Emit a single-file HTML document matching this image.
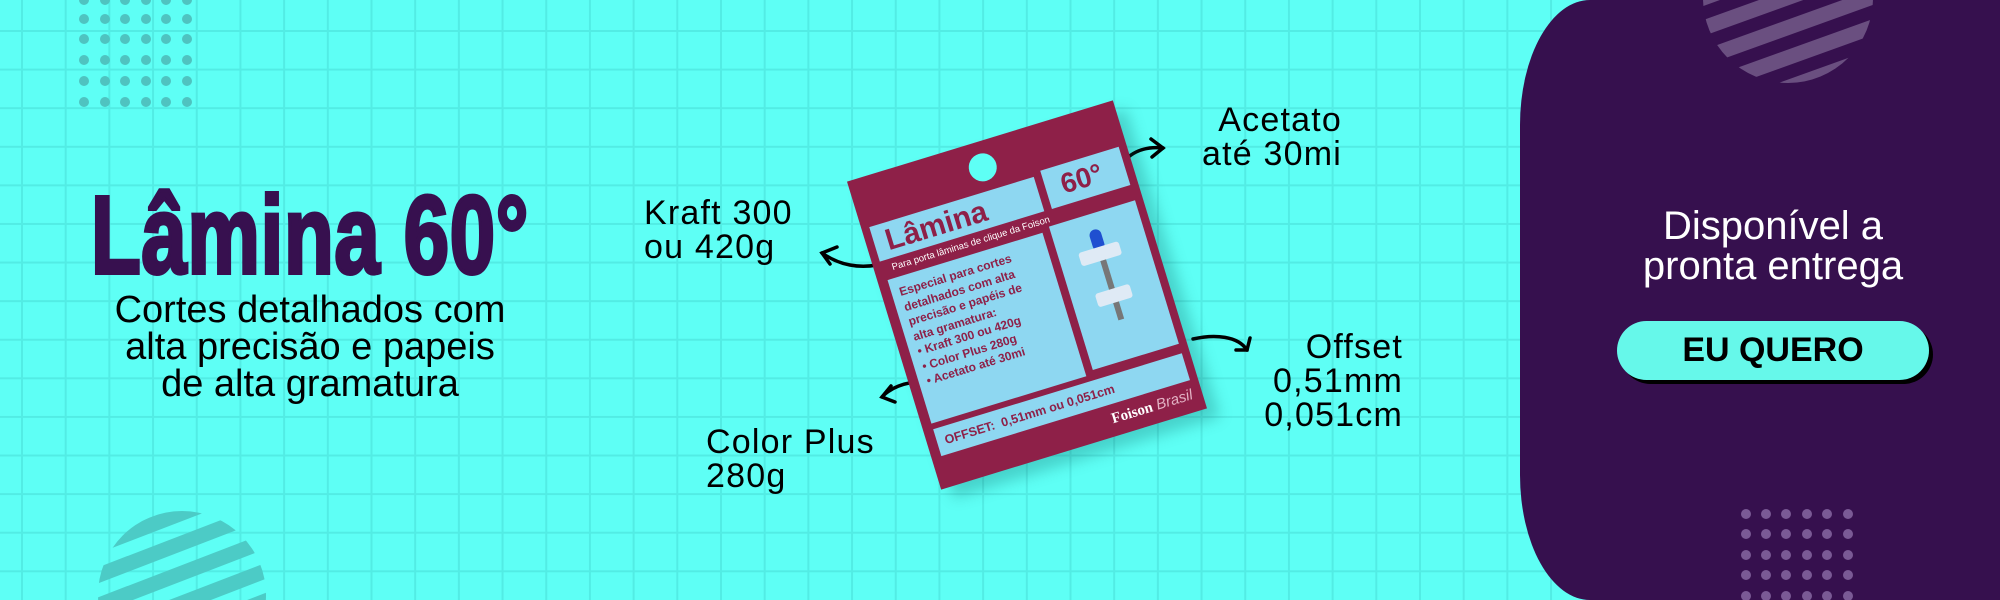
<!DOCTYPE html>
<html><head><meta charset="utf-8"><style>
*{margin:0;padding:0;box-sizing:border-box}
html,body{width:2000px;height:600px;overflow:hidden}
body{position:relative;font-family:"Liberation Sans",sans-serif;
background-color:#5efff5;
background-image:linear-gradient(90deg,#52ece4 2px,transparent 2px),linear-gradient(#52ece4 2px,transparent 2px);
background-size:43.7px 38.6px;background-position:21px 30px}
.abs{position:absolute}
.lbl{position:absolute;font-size:34px;letter-spacing:1.2px;line-height:34px;color:#000}
.panel{position:absolute;left:1520px;top:0;width:480px;height:600px;background:#36104e;border-radius:70px 0 0 70px/125px 0 0 125px;overflow:hidden}
.card{position:absolute;left:888px;top:134px;width:278px;height:322px;background:#8e2048;transform:rotate(-17deg);box-shadow:10px 12px 14px rgba(0,80,80,0.25)}
.box{position:absolute;background:#8ed7f1}
.ct{color:#8e2048;font-weight:bold}
</style></head><body>

<svg class="abs" style="left:0;top:0" width="2000" height="600">
<g fill="#4fc3c0">
<g id="dr">
<circle cx="84" cy="0" r="5"/><circle cx="105" cy="0" r="5"/><circle cx="125" cy="0" r="5"/><circle cx="146" cy="0" r="5"/><circle cx="166" cy="0" r="5"/><circle cx="187" cy="0" r="5"/>
</g>
<use href="#dr" y="19"/><use href="#dr" y="39"/><use href="#dr" y="60"/><use href="#dr" y="81"/><use href="#dr" y="102"/>
</g>
<defs><clipPath id="c1"><circle cx="182" cy="595" r="84"/></clipPath></defs>
<g clip-path="url(#c1)" stroke="#4ccbc6" stroke-width="15">
<line x1="60" y1="560" x2="320" y2="460"/><line x1="60" y1="590" x2="320" y2="490"/><line x1="60" y1="620" x2="320" y2="520"/><line x1="60" y1="650" x2="320" y2="550"/><line x1="60" y1="680" x2="320" y2="580"/><line x1="60" y1="710" x2="320" y2="610"/>
</g>
<g fill="none" stroke="#000" stroke-width="3.5" stroke-linecap="round">
<path d="M877 265 C860 268 840 266 822 253"/><path d="M837 247 L822 253 L830 264"/>
<path d="M1120 166 C1130 152 1145 146 1163 148"/><path d="M1151 139 L1163 148 L1152 157"/>
<path d="M1193 339 C1215 334 1238 336 1247 350"/><path d="M1236 350 L1247 350 L1250 338"/>
<path d="M920 382 C905 382 890 388 882 397"/><path d="M891 386 L882 397 L895 402"/>
</g>
</svg>

<div class="abs" style="left:91px;top:172px;font-size:110px;font-weight:bold;color:#37104f;-webkit-text-stroke:4px #37104f;transform:scaleX(0.74);transform-origin:0 0;white-space:nowrap;letter-spacing:1px">Lâmina 60°</div>
<div class="abs" style="left:60px;width:500px;top:292px;text-align:center;font-size:38px;line-height:37px;color:#000">Cortes detalhados com<br>alta precisão e papeis<br>de alta gramatura</div>

<div class="lbl" style="left:644px;top:196px">Kraft 300<br>ou 420g</div>
<div class="lbl" style="left:1150px;top:103px;width:192px;text-align:right">Acetato<br>até 30mi</div>
<div class="lbl" style="left:1200px;top:330px;width:203px;text-align:right">Offset<br>0,51mm<br>0,051cm</div>
<div class="lbl" style="left:706px;top:425px">Color Plus<br>280g</div>

<div class="card">
 <div class="abs" style="left:120px;top:12px;width:28px;height:28px;border-radius:50%;background:#5efff5"></div>
 <div class="box" style="left:8px;top:50px;width:172px;height:36px"><div class="ct" style="font-size:30px;padding:2px 0 0 12px">Lâmina</div></div>
 <div class="box" style="left:188px;top:46px;width:82px;height:40px"><div class="ct" style="font-size:28px;padding:4px 0 0 16px">60°</div></div>
 <div class="abs" style="left:18px;top:90px;font-size:9.5px;color:#fff;white-space:nowrap">Para porta lâminas de clique da Foison</div>
 <div class="box" style="left:10px;top:106px;width:162px;height:150px"><div class="ct" style="font-size:12px;line-height:15.5px;padding:8px 0 0 8px">Especial para cortes<br>detalhados com alta<br>precisão e papéis de<br>alta gramatura:<br>• Kraft 300 ou 420g<br>• Color Plus 280g<br>• Acetato até 30mi</div></div>
 <div class="box" style="left:180px;top:102px;width:90px;height:150px">
  <div class="abs" style="left:36px;top:16px;width:12px;height:22px;border-radius:6px;background:#1f4fd0"></div>
  <div class="abs" style="left:20px;top:34px;width:42px;height:14px;background:#dfeaf5;border-radius:3px"></div>
  <div class="abs" style="left:39px;top:48px;width:6px;height:62px;background:#777"></div>
  <div class="abs" style="left:24px;top:78px;width:36px;height:14px;background:#dfeaf5;border-radius:3px"></div>
 </div>
 <div class="box" style="left:10px;top:262px;width:260px;height:28px"><div class="ct" style="font-size:12.5px;padding:7px 0 0 8px">OFFSET:&nbsp; 0,51mm ou 0,051cm</div></div>
 <div class="abs" style="right:10px;top:296px;font-size:15px;color:#fff;white-space:nowrap"><b style="font-family:'Liberation Serif',serif">Foison</b> <i style="color:#e3b3c5">Brasil</i></div>
</div>

<div class="panel">
<svg class="abs" style="left:0;top:0" width="480" height="600">
<defs><clipPath id="c2"><circle cx="268" cy="-2" r="85"/></clipPath></defs>
<g clip-path="url(#c2)" stroke="#6a4f80" stroke-width="15">
<line x1="150" y1="-20" x2="400" y2="-110"/><line x1="150" y1="10" x2="400" y2="-80"/><line x1="150" y1="40" x2="400" y2="-50"/><line x1="150" y1="70" x2="400" y2="-20"/><line x1="150" y1="100" x2="400" y2="10"/><line x1="150" y1="130" x2="400" y2="40"/>
</g>
<g fill="#7a5a95">
<g id="dr2"><circle cx="226" cy="514" r="5"/><circle cx="246" cy="514" r="5"/><circle cx="266" cy="514" r="5"/><circle cx="287" cy="514" r="5"/><circle cx="307" cy="514" r="5"/><circle cx="328" cy="514" r="5"/></g>
<use href="#dr2" y="20"/><use href="#dr2" y="41"/><use href="#dr2" y="61"/><use href="#dr2" y="82"/>
</g>
</svg>
<div class="abs" style="left:0;width:506px;top:206px;text-align:center;color:#fff;font-size:40px;line-height:40px">Disponível a<br>pronta entrega</div>
<div class="abs" style="left:101px;top:325px;width:312px;height:59px;border-radius:30px;background:#000"></div>
<div class="abs" style="left:97px;top:321px;width:312px;height:59px;border-radius:30px;background:#66f8ea;text-align:center;font-weight:bold;font-size:34px;line-height:59px;color:#000">EU QUERO</div>
</div>
</body></html>
